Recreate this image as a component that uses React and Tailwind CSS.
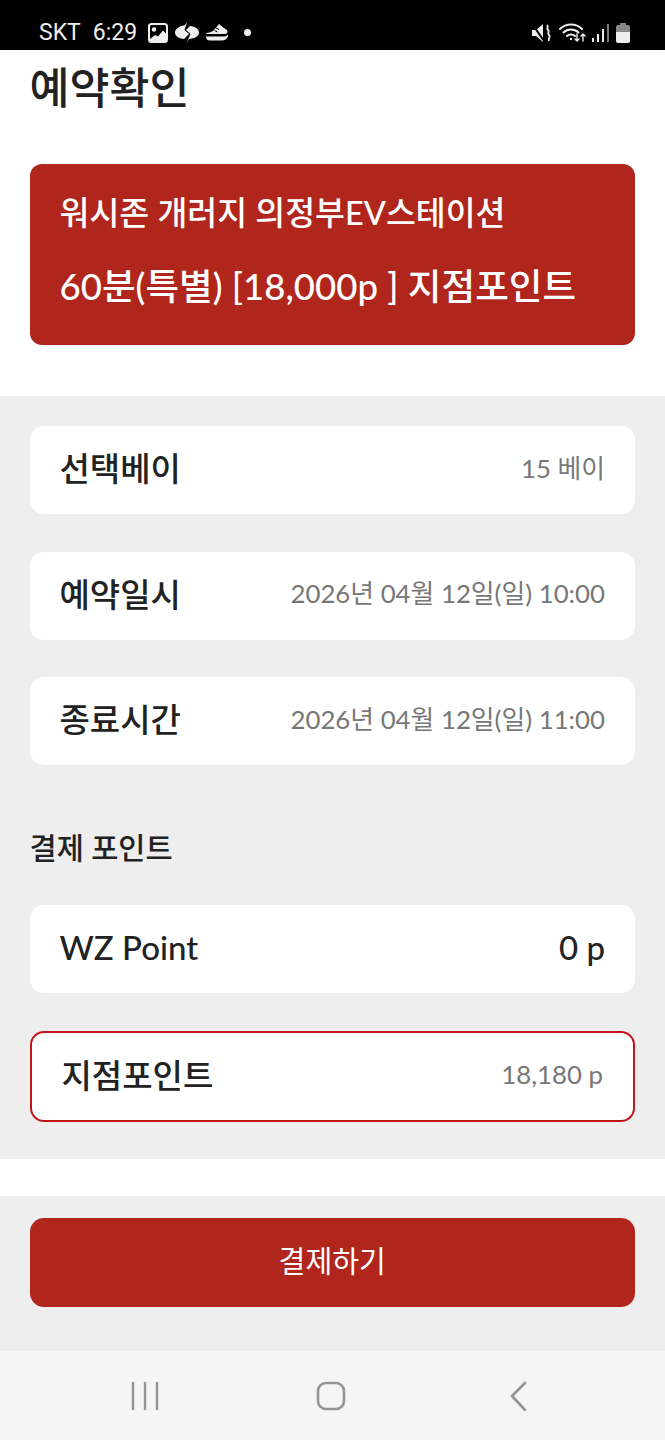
const FONT = "font-['Lato','Noto_Sans_CJK_KR',sans-serif]";

const Row = ({ label, value, valueClass = 'text-[25.8px] text-[#777777]' }) => (
  <div className="h-[88px] bg-white rounded-[14px] px-[30px] pb-[3px] flex items-center justify-between">
    <span className="text-[33px] font-medium text-[#222222] leading-none">{label}</span>
    <span className={`${valueClass} leading-none`}>{value}</span>
  </div>
);

const StatusBar = () => (
  <div className="h-[50px] bg-black text-[#eeeeee] flex items-center pl-[39px] pr-[35px] pt-[15px] font-['Roboto',sans-serif]">
    <span className="text-[23px] leading-none">SKT</span>
    <span className="text-[23px] leading-none ml-[12px]">6:29</span>
    <svg className="ml-[11px]" width="20" height="20" viewBox="0 0 20 20" fill="none">
      <rect x="1" y="1" width="18" height="18" rx="2.5" stroke="#eee" strokeWidth="2" />
      <circle cx="6" cy="6.5" r="2.2" fill="#eee" />
      <path d="M2 16l5-4 3 1.5 5-6 3 3V18H2z" fill="#eee" />
    </svg>
    <svg className="ml-[7px]" width="24" height="21" viewBox="0 0 24 21" fill="#eee">
      <path d="M12 0L9.500 3.500C4 4 0 7 0 10.500 0 14 4 16.500 9 17L14 12 9.500 8z" />
      <path d="M11.500 21L14 17C20 16.500 24 14 24 10.500 24 7 20 4.500 15 4L11 8l4.500 4z" />
    </svg>
    <svg className="ml-[6px]" width="24" height="19" viewBox="0 0 24 19" fill="#eee">
      <path d="M1 10c3 0 6-1 8-3l5-6c2 1 3 3 5 4l3 2c1 2 0 4-2 4H3c-1 0-2-.5-2-1z" />
      <path d="M1 13.500h18c2 0 3-1 4-2v2c-1 2-3 4-6 4H5c-2 0-4-1-4-4z" />
      <path d="M11 5l3 1.500M9.500 7.500l3 1.500" stroke="#000" strokeWidth="1" />
    </svg>
    <span className="ml-[15px] w-[7px] h-[7px] rounded-full bg-[#eeeeee]" />
    <div className="ml-auto flex items-center">
      <svg width="19" height="18" viewBox="0 0 19 18" fill="#eee">
        <path d="M0 6h4l7-6v18l-7-6H0z" />
        <path d="M1 1l11 16" stroke="#000" strokeWidth="2" />
        <path d="M15 1c2 2-1 3 1 5s-1 3 1 5-1 3 0 6" stroke="#eee" strokeWidth="1.800" fill="none" />
      </svg>
      <svg className="ml-[8px]" width="27" height="20" viewBox="0 0 27 20" fill="none" stroke="#eee" strokeLinecap="round">
        <path d="M1 6c6-6 16-6 22 0" strokeWidth="2" />
        <path d="M4.500 9.500c4-4 11-4 15 0" strokeWidth="2" />
        <path d="M8 13c2-2 6-2 8 0" strokeWidth="2" />
        <circle cx="12" cy="16" r="1.200" fill="#eee" stroke="none" />
        <path d="M18 11v7m-2-2l2 2 2-2M24 18v-7m-2 2l2-2 2 2" strokeWidth="1.400" />
      </svg>
      <svg className="ml-[5px]" width="19" height="20" viewBox="0 0 19 20" fill="#eee">
        <rect x="1" y="15" width="2" height="4" />
        <rect x="6" y="11" width="2" height="8" />
        <rect x="11" y="6" width="2" height="13" />
        <rect x="16" y="1" width="2" height="18" fill="#777" />
      </svg>
      <svg className="ml-[6px]" width="14" height="20" viewBox="0 0 14 20">
        <path d="M4 0h6v2h2a2 2 0 012 2v5H0V4a2 2 0 012-2h2z" fill="#888" />
        <path d="M0 9h14v9a2 2 0 01-2 2H2a2 2 0 01-2-2z" fill="#eee" />
      </svg>
    </div>
  </div>
);

export default function App() {
  return (
    <div className={`${FONT} w-[665px] h-[1440px] flex flex-col bg-white overflow-hidden`}>
      <StatusBar />

      {/* Header */}
      <div className="h-[346px] pl-[29.5px] pr-[30px] bg-white">
        <h1 className="text-[43.5px] font-medium text-[#222222] leading-none pt-[16px]">예약확인</h1>
        <div className="mt-[54.5px] h-[181px] rounded-[12px] bg-[#b0261c] text-white px-[30px] pt-[29px]">
          <div className="text-[32.5px] leading-[40px] font-medium">워시존 개러지 의정부EV스테이션</div>
          <div className="mt-[31px] text-[36.6px] leading-[44px] font-medium">60분(특별) [18,000p ] 지점포인트</div>
        </div>
      </div>

      {/* Details */}
      <div className="h-[763px] bg-[#eeeeee] pl-[29.5px] pr-[30px] pt-[30px]">
        <div className="flex flex-col gap-[37.5px]">
          <Row label="선택베이" value="15 베이" />
          <Row label="예약일시" value="2026년 04월 12일(일) 10:00" />
          <Row label="종료시간" value="2026년 04월 12일(일) 11:00" />
        </div>
        <div className="mt-[65px] text-[29.5px] leading-[36px] font-medium text-[#222222]">결제 포인트</div>
        <div className="mt-[39px]">
          <Row label="WZ Point" value="0 p" valueClass="text-[33px] font-medium text-[#222222]" />
        </div>
        <div className="mt-[38px] h-[91px] bg-white rounded-[14px] border-2 border-[#c0161c] px-[30px] pb-[3px] flex items-center justify-between">
          <span className="text-[33px] font-medium text-[#222222] leading-none">지점포인트</span>
          <span className="text-[25.8px] text-[#777777] leading-none">18,180 p</span>
        </div>
      </div>

      <div className="h-[37px] bg-white" />

      {/* Pay button */}
      <div className="h-[155px] bg-[#eeeeee] pl-[29.5px] pr-[30px] pt-[22px]">
        <button className="w-full h-[89px] rounded-[14px] bg-[#b0261c] text-white text-[29.2px] pb-[3px] flex items-center justify-center">
          결제하기
        </button>
      </div>

      {/* Android nav */}
      <div className="h-[89px] bg-[#f5f5f5] flex items-center">
        <svg width="30" height="30" viewBox="0 0 30 30" fill="none" stroke="#949494" strokeWidth="2.400" strokeLinecap="round" className="ml-[130px]">
          <path d="M3 2v26M15 2v26M27 2v26" />
        </svg>
        <svg width="30" height="30" viewBox="0 0 30 30" fill="none" stroke="#949494" strokeWidth="2.600" className="ml-[156px]">
          <rect x="2" y="2" width="26" height="26" rx="8" />
        </svg>
        <svg width="20" height="30" viewBox="0 0 20 30" fill="none" stroke="#949494" strokeWidth="2.600" strokeLinecap="round" strokeLinejoin="round" className="ml-[163px]">
          <path d="M16 2L3 15l13 14" />
        </svg>
      </div>
    </div>
  );
}
